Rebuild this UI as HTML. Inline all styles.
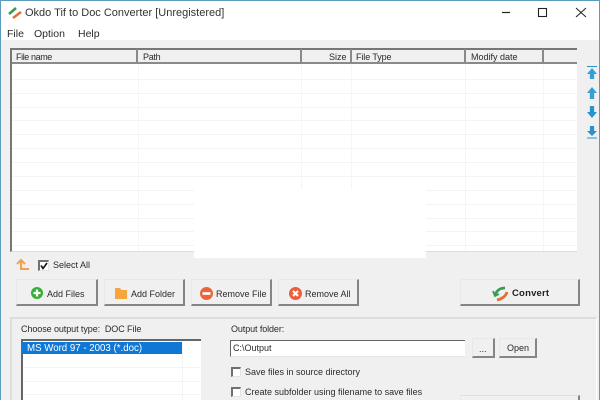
<!DOCTYPE html>
<html><head><meta charset="utf-8"><style>
html,body{margin:0;padding:0;width:600px;height:400px;overflow:hidden}
#w{position:absolute;left:0;top:0;width:600px;height:400px;overflow:hidden;background:#f0f0f0;font-family:"Liberation Sans",sans-serif;font-size:9px;color:#2a2a2a}
#w div,#w span{position:absolute;white-space:nowrap;box-sizing:border-box}
svg{position:absolute;overflow:visible}
.btn{background:#f0f0f0;border-top:1px solid #e8e8e8;border-left:1px solid #e8e8e8;border-right:2px solid #858585;border-bottom:2px solid #858585}
.t{line-height:12px}
.hl{left:12px;width:565px;height:1px;background:#f4f4f4}
.vl{top:64px;width:1px;height:187px;background:#f5f5f5}
.hd{top:49px;width:2px;height:15px;background:#8a8a8a}
.cb{width:10px;height:10px;background:#fff;border:1px solid #e4e4e4;border-top:2px solid #707070;border-left:2px solid #707070}
</style></head><body><div id="w">
<div style="left:0;top:0;width:600px;height:40px;background:#fff"></div>
<div style="left:0;top:0;width:600px;height:1px;background:#5b9bbd"></div>
<div style="left:0;top:0;width:1px;height:400px;background:#5b9bbd"></div>
<div style="left:599px;top:0;width:1px;height:400px;background:#5b9bbd"></div>
<svg style="left:7px;top:6px" width="16" height="14" viewBox="0 0 16 14"><path d="M2 8 L9 2" stroke="#3a9a52" stroke-width="2.6" fill="none"/><path d="M6 12 L14 6" stroke="#e2703a" stroke-width="2.6" fill="none"/></svg>
<div class="t" style="left:25px;top:7px;font-size:11px;color:#333">Okdo Tif to Doc Converter [Unregistered]</div>
<svg style="left:495px;top:5px" width="100" height="16" viewBox="0 0 100 16" fill="none" stroke="#222"><path d="M7 7.5H15" stroke-width="1.2"/><rect x="43.5" y="3.5" width="8" height="8" stroke-width="1.1"/><path d="M81 3 L91 12 M91 3 L81 12" stroke-width="1"/></svg>
<div class="t" style="left:7px;top:28px;font-size:10.5px">File</div>
<div class="t" style="left:34px;top:28px;font-size:10.5px">Option</div>
<div class="t" style="left:78px;top:28px;font-size:10.5px">Help</div>

<div style="left:10px;top:48px;width:567px;height:204px;background:#fff;border-left:2px solid #777;border-top:2px solid #777;border-bottom:1px solid #ddd"></div>
<div style="left:12px;top:50px;width:565px;height:13px;background:#f0f0f0"></div>
<div style="left:12px;top:62px;width:565px;height:2px;background:#8a8a8a"></div>
<div class="hd" style="left:136px"></div><div class="hd" style="left:300px"></div><div class="hd" style="left:350px"></div><div class="hd" style="left:464px"></div><div class="hd" style="left:542px"></div>
<div class="t" style="left:16px;top:51px;letter-spacing:-.4px">File name</div>
<div class="t" style="left:143px;top:51px;letter-spacing:-.3px">Path</div>
<div class="t" style="left:329px;top:51px">Size</div>
<div class="t" style="left:356px;top:51px;letter-spacing:-.1px">File Type</div>
<div class="t" style="left:471px;top:51px">Modify date</div>
<div class="hl" style="top:79px"></div><div class="hl" style="top:93px"></div><div class="hl" style="top:107px"></div><div class="hl" style="top:120px"></div><div class="hl" style="top:134px"></div><div class="hl" style="top:148px"></div><div class="hl" style="top:162px"></div><div class="hl" style="top:176px"></div><div class="hl" style="top:190px"></div><div class="hl" style="top:204px"></div><div class="hl" style="top:218px"></div><div class="hl" style="top:231px"></div><div class="hl" style="top:245px"></div>
<div class="vl" style="left:138px"></div><div class="vl" style="left:301px"></div><div class="vl" style="left:351px"></div><div class="vl" style="left:465px"></div><div class="vl" style="left:543px"></div>
<div style="left:194px;top:189px;width:232px;height:69px;background:#fff"></div>

<svg style="left:587px;top:64px" width="10" height="76" viewBox="0 0 14 76" preserveAspectRatio="none">
<path d="M0 2.500H14" stroke="#2a8fc4" stroke-width="1"/><path d="M7 4L14 10H10V15H4V10H0Z" fill="#35a0d6"/>
<path d="M7 23L14 29H10V35H4V29H0Z" fill="#35a0d6"/>
<path d="M4 42H10V48H14L7 54L0 48H4Z" fill="#2a92cc"/>
<path d="M4 62H10V67H14L7 72L0 67H4Z" fill="#2a92cc"/><path d="M0 74H14" stroke="#2a8fc4"/>
</svg>

<svg style="left:16px;top:259px" width="14" height="12" viewBox="0 0 14 12" fill="none" stroke="#f0a050" stroke-width="2"><path d="M1 5L5 1L9 5M5 2V10H13"/></svg>
<div class="cb" style="left:38px;top:260px;width:11px;height:11px"></div>
<svg style="left:39px;top:261px" width="10" height="10" viewBox="0 0 10 10" fill="none" stroke="#111" stroke-width="1.6"><path d="M2 4.500L4 7.500L8 2"/></svg>
<div class="t" style="left:53px;top:259px">Select All</div>

<div class="btn" style="left:16px;top:279px;width:82px;height:27px"></div>
<svg style="left:31px;top:287px" width="12" height="12" viewBox="0 0 12 12"><circle cx="6" cy="6" r="6" fill="#35b035"/><path d="M6 2.500V9.500M2.500 6H9.500" stroke="#fff" stroke-width="2.200"/></svg>
<div class="t" style="left:47px;top:288px">Add Files</div>
<div class="btn" style="left:104px;top:279px;width:81px;height:27px"></div>
<svg style="left:115px;top:287px" width="13" height="13" viewBox="0 0 13 13"><path d="M0 1H5L6.500 3H12V12H0Z" fill="#f5a63c"/></svg>
<div class="t" style="left:131px;top:288px">Add Folder</div>
<div class="btn" style="left:191px;top:279px;width:81px;height:27px"></div>
<svg style="left:200px;top:287px" width="13" height="13" viewBox="0 0 13 13"><circle cx="6.500" cy="6.500" r="6.500" fill="#e8663c"/><rect x="2.500" y="5.200" width="8" height="2.600" fill="#fff"/></svg>
<div class="t" style="left:216px;top:288px">Remove File</div>
<div class="btn" style="left:278px;top:279px;width:81px;height:27px"></div>
<svg style="left:289px;top:287px" width="13" height="13" viewBox="0 0 13 13"><circle cx="6.500" cy="6.500" r="6.500" fill="#e8603c"/><path d="M4 4L9 9M9 4L4 9" stroke="#fff" stroke-width="2.200"/></svg>
<div class="t" style="left:305px;top:288px">Remove All</div>
<div class="btn" style="left:460px;top:279px;width:120px;height:27px"></div>
<svg style="left:492px;top:286px" width="17" height="16" viewBox="0 0 17 16" fill="none" stroke-width="2.800"><path d="M13 2C8 2 5 4 3 9" stroke="#3a9a52"/><path d="M1 5L3 10L7 8" stroke="#3a9a52" stroke-width="1.800"/><path d="M15 6C14 10 10 13 5 14" stroke="#e2703a"/></svg>
<div class="t" style="left:512px;top:288px;font-weight:bold;font-size:9.500px;letter-spacing:.2px;color:#222">Convert</div>

<div style="left:10px;top:317px;width:587px;height:83px;border-top:2px solid #ddd;border-left:2px solid #ddd;border-right:1px solid #fff"></div>
<div class="t" style="left:21px;top:323px;letter-spacing:-.08px">Choose output type:&nbsp; DOC File</div>
<div style="left:21px;top:339px;width:180px;height:61px;background:#fff;border-left:2px solid #666;border-top:2px solid #666"></div>
<div style="left:23px;top:367px;width:178px;height:1px;background:#f4f4f4"></div>
<div style="left:23px;top:381px;width:178px;height:1px;background:#f4f4f4"></div>
<div style="left:23px;top:394px;width:178px;height:1px;background:#f4f4f4"></div>
<div style="left:182px;top:341px;width:1px;height:59px;background:#f4f4f4"></div>
<div class="t" style="left:22px;top:342px;width:160px;height:12px;background:#0f78d7;color:#fff;font-size:9.700px;padding-left:5px;line-height:13px">MS Word 97 - 2003 (*.doc)</div>

<div class="t" style="left:231px;top:323px;letter-spacing:-.1px">Output folder:</div>
<div style="left:230px;top:340px;width:235px;height:17px;background:#fff;border-left:1px solid #666;border-top:1px solid #666;border-bottom:1px solid #e4e4e4"></div>
<div class="t" style="left:233px;top:342px">C:\Output</div>
<div class="btn" style="left:472px;top:338px;width:23px;height:20px"></div>
<div class="t" style="left:479px;top:343px">...</div>
<div class="btn" style="left:499px;top:338px;width:38px;height:20px"></div>
<div class="t" style="left:507px;top:342px">Open</div>
<div class="cb" style="left:231px;top:367px"></div>
<div class="t" style="left:245px;top:366px">Save files in source directory</div>
<div class="cb" style="left:231px;top:387px"></div>
<div class="t" style="left:245px;top:386px">Create subfolder using filename to save files</div>
<div style="left:460px;top:395px;width:120px;height:5px;background:#f0f0f0;border-top:1px solid #e0e0e0;border-left:1px solid #e8e8e8;border-right:2px solid #858585"></div>
</div></body></html>
